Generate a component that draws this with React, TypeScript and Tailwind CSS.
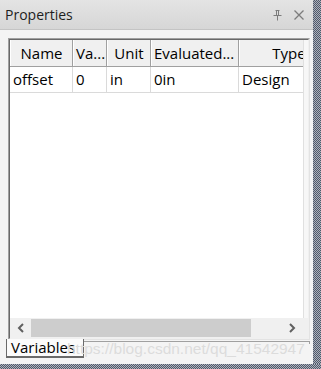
const columns = [
  { label: "Name", width: 63, align: "center" },
  { label: "Va...", width: 34, align: "left" },
  { label: "Unit", width: 44, align: "center" },
  { label: "Evaluated...", width: 88, align: "left" },
  { label: "Type", width: 100, align: "center" },
];

const row = ["offset", "0", "in", "0in", "Design"];

const dotted =
  "bg-[repeating-conic-gradient(#4e586c_0_25%,#aeb1b8_0_50%)] bg-[length:2px_2px]";

export default function App() {
  return (
    <div
      className="w-[321px] h-[369px] flex flex-col bg-[#f0f0f0] text-black overflow-hidden relative"
      style={{ fontFamily: '"Open Sans", "Noto Sans", sans-serif' }}
    >
      <div className="flex h-[364px]">
        <div className="w-[313px] flex flex-col">
          {/* title bar */}
          <div className="h-[29px] flex items-center justify-between pl-[5px] pr-[8px] bg-gradient-to-b from-[#e4e4e4] to-[#d6d6d6] border-b border-[#c4c4c4] box-content">
            <span className="text-[14px] leading-none text-[#1e1e1e]">Properties</span>
            <div className="flex items-center gap-[10px] text-[#7c7c7c]">
              <svg width="11" height="12" viewBox="0 0 11 12" fill="none" stroke="currentColor" strokeWidth="1">
                <path d="M3.5 1.5h4M4.5 1.5v5M6.5 1.5v5M1.5 6.5h8M5.5 6.5v5" />
              </svg>
              <svg width="12" height="12" viewBox="0 0 12 12" stroke="currentColor" strokeWidth="1.3">
                <path d="M1.5 1.5l9 9M10.5 1.5l-9 9" />
              </svg>
            </div>
          </div>

          {/* content */}
          <div className="flex-1 flex flex-col bg-[#f4f4f4] pt-[8px] pr-[3px]">
            <div className="ml-[8px] h-[302px] border border-[#a0a0a0] border-r-[#e3e3e3] border-b-[#e3e3e3] flex">
              <div className="flex-1 border border-[#696969] border-r-[#f0f0f0] border-b-[#f0f0f0] bg-white flex flex-col overflow-hidden">
                <div className="flex-1 flex">
                  <div className="w-[293px] overflow-hidden flex flex-col">
                    {/* header */}
                    <div className="flex h-[27px] shrink-0 bg-[#f0f0f0] border-b border-[#a0a0a0]">
                      {columns.map((c) => (
                        <div
                          key={c.label}
                          style={{ width: c.width }}
                          className={`shrink-0 h-full flex items-center border-l border-white border-r border-r-[#a0a0a0] text-[15px] whitespace-nowrap overflow-hidden ${
                            c.align === "center" ? "justify-center" : "pl-[2px]"
                          }`}
                        >
                          {c.label}
                        </div>
                      ))}
                    </div>
                    {/* data row */}
                    <div className="flex h-[26px] shrink-0 border-b border-[#dadada]">
                      {row.map((v, i) => (
                        <div
                          key={i}
                          style={{ width: columns[i].width }}
                          className="shrink-0 h-full flex items-center pl-[3px] border-r border-[#dadada] text-[15px] whitespace-nowrap"
                        >
                          {v}
                        </div>
                      ))}
                    </div>
                  </div>
                  <div className="flex-1 border-l border-[#e0e0e0] bg-[#f7f7f7]" />
                </div>
                {/* horizontal scrollbar */}
                <div className="h-[20px] shrink-0 flex items-center bg-[#f0f0f0]">
                  <div className="w-[21px] flex justify-center">
                    <svg width="8" height="10" viewBox="0 0 8 10" fill="none" stroke="#606060" strokeWidth="2">
                      <path d="M6 1L2 5l4 4" />
                    </svg>
                  </div>
                  <div className="w-[220px] h-[18px] bg-[#cdcdcd]" />
                  <div className="flex-1 flex justify-end pr-[12px]">
                    <svg width="8" height="10" viewBox="0 0 8 10" fill="none" stroke="#606060" strokeWidth="2">
                      <path d="M2 1l4 4-4 4" />
                    </svg>
                  </div>
                </div>
              </div>
            </div>

            {/* tab strip */}
            <div className="flex h-[22px] pl-[6px]">
              <div className="w-[78px] h-[19px] -mt-[1px] bg-[#fbfbfb] border border-t-0 border-[#6a6a6a] border-b-2 flex items-center pl-[4px] text-[15px] leading-none relative z-10">
                Variables
              </div>
              <div className="flex-1 h-[3px] border-t border-[#a0a0a0] border-r mt-[1px]" />
            </div>
          </div>
        </div>
        <div className={`w-[8px] ${dotted}`} />
      </div>
      <div className={`h-[5px] ${dotted}`} />

      {/* watermark */}
      <div
        className="absolute left-[67px] top-[339px] text-[15.5px] leading-[20px] text-[#dcdcdc] whitespace-nowrap pointer-events-none z-20"
        style={{ fontFamily: '"Liberation Sans", Arial, sans-serif' }}
      >
        https://blog.csdn.net/qq_41542947
      </div>
    </div>
  );
}
